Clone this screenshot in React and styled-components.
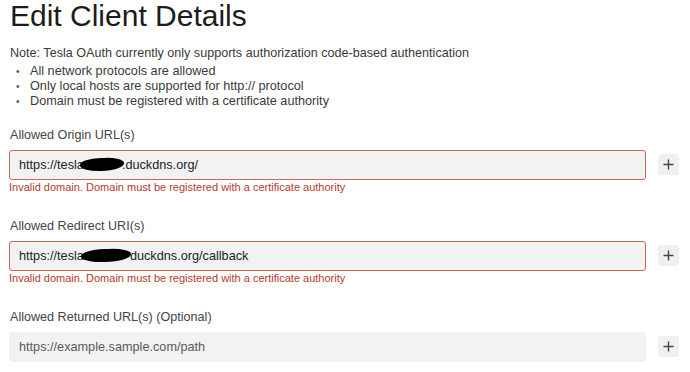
import React from 'react'
import styled, { createGlobalStyle } from 'styled-components'

const Global = createGlobalStyle`
  body {
    margin: 0;
    background: #fff;
    font-family: "Liberation Sans", Arial, sans-serif;
    color: #333;
  }
`;

const Page = styled.div`
  width: 690px;
  height: 372px;
  overflow: hidden;
  padding: 1px 11px 0 8px;
  box-sizing: border-box;
`;

const Title = styled.h1`
  margin: 0 0 0 2px;
  font-size: 30px;
  line-height: 30px;
  font-weight: 400;
  color: #1c1c1c;
`;

const Note = styled.p`
  margin: 14.5px 0 3px 2px;
  font-size: 12.6px;
  line-height: 15px;
  color: #3a3a3a;
`;

const Bullets = styled.ul`
  margin: 0 0 19px;
  padding: 0 0 0 22px;
  list-style: none;
  font-size: 12.7px;
  line-height: 15px;
  color: #3a3a3a;
`;

const Bullet = styled.li`
  &::before {
    content: "•";
    display: inline-block;
    width: 14px;
    margin-left: -14px;
    font-size: 10px;
    color: #555;
  }
`;

const Group = styled.div`
  margin-bottom: ${p => (p.last ? 0 : 25)}px;
`;

const Label = styled.div`
  font-size: 12.6px;
  line-height: 15px;
  color: #444;
  margin-left: 2px;
  margin-bottom: 7px;
`;

const Row = styled.div`
  display: flex;
  align-items: center;
  gap: 12px;
`;

const Field = styled.div`
  flex: 1;
  height: 30px;
  box-sizing: border-box;
  margin-left: 1px;
  display: flex;
  align-items: center;
  padding-left: 9px;
  background: #f2f2f2;
  border: 1px solid ${p => (p.invalid ? '#c9675c' : '#f2f2f2')};
  border-radius: 3px;
  font-size: 12.7px;
  color: ${p => (p.placeholder ? '#5a5a5a' : '#222')};
  white-space: nowrap;
`;

const Redact = styled.span`
  display: inline-block;
  width: ${p => p.w}px;
  height: 13px;
  margin: 0 ${p => p.mr || 0}px 0 ${p => p.ml || 0}px;
  background: #000;
  border-radius: 50% 45% 55% 50%;
  transform: rotate(-2deg);
`;

const AddButton = styled.button`
  width: 21px;
  height: 21px;
  padding: 0;
  border: none;
  border-radius: 3px;
  background: #f0f0f0;
  display: flex;
  align-items: center;
  justify-content: center;
  cursor: pointer;
`;

const Error = styled.div`
  font-size: 11px;
  line-height: 13px;
  color: #b23b30;
  margin-top: 1px;
  margin-left: 1px;
`;

const Plus = () => (
  <svg width="11" height="11" viewBox="0 0 11 11">
    <path d="M5.5 0.5v10M0.5 5.5h10" stroke="#444" strokeWidth="1.4" />
  </svg>
);

const errorText = 'Invalid domain. Domain must be registered with a certificate authority';

const App = () => {
  return (
    <Page>
      <Global />
      <Title>Edit Client Details</Title>
      <Note>Note: Tesla OAuth currently only supports authorization code-based authentication</Note>
      <Bullets>
        <Bullet>All network protocols are allowed</Bullet>
        <Bullet>Only local hosts are supported for http:// protocol</Bullet>
        <Bullet>Domain must be registered with a certificate authority</Bullet>
      </Bullets>

      <Group>
        <Label>Allowed Origin URL(s)</Label>
        <Row>
          <Field invalid>
            https://tesla<Redact w={44} ml={-4} mr={-2} />.duckdns.org/
          </Field>
          <AddButton><Plus /></AddButton>
        </Row>
        <Error>{errorText}</Error>
      </Group>

      <Group>
        <Label>Allowed Redirect URI(s)</Label>
        <Row>
          <Field invalid>
            https://tesla<Redact w={50} ml={-3} mr={-1} />duckdns.org/callback
          </Field>
          <AddButton><Plus /></AddButton>
        </Row>
        <Error>{errorText}</Error>
      </Group>

      <Group last>
        <Label>Allowed Returned URL(s) (Optional)</Label>
        <Row>
          <Field placeholder="true">https://example.sample.com/path</Field>
          <AddButton><Plus /></AddButton>
        </Row>
      </Group>
    </Page>
  )
}

export default App
